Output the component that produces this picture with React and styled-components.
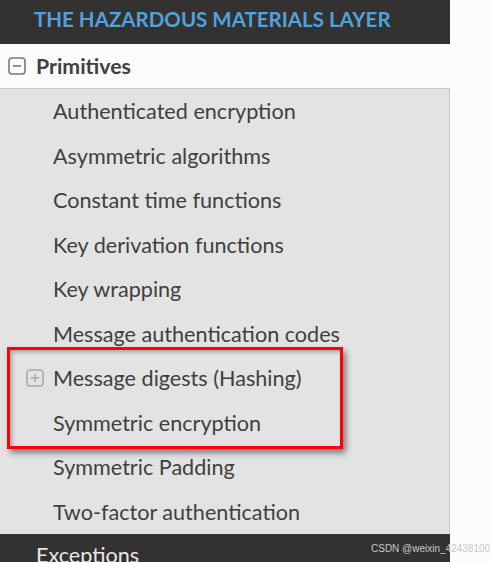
import React from "react";
import styled, { createGlobalStyle } from "styled-components";

const GlobalStyle = createGlobalStyle`
  html, body {
    margin: 0;
    padding: 0;
    background: #fcfcfc;
    font-family: Lato, "Open Sans", sans-serif;
  }
  #root {
    height: 562px;
    overflow: hidden;
  }
`;

const ITEMS_BEFORE = [
  "Authenticated encryption",
  "Asymmetric algorithms",
  "Constant time functions",
  "Key derivation functions",
  "Key wrapping",
  "Message authentication codes",
];

const ITEMS_AFTER = ["Symmetric Padding", "Two-factor authentication"];

const ToggleBox = ({ type, color }) => (
  <svg width="18" height="18" viewBox="0 0 18 18">
    <rect
      x="1"
      y="1"
      width="16"
      height="16"
      rx="3"
      fill="none"
      stroke={color}
      strokeWidth="1.6"
    />
    <line x1="5" y1="9" x2="13" y2="9" stroke={color} strokeWidth="1.6" />
    {type === "plus" && (
      <line x1="9" y1="5" x2="9" y2="13" stroke={color} strokeWidth="1.6" />
    )}
  </svg>
);

const App = () => {
  return (
    <Page>
      <GlobalStyle />
      <Sidebar>
        <Header>THE HAZARDOUS MATERIALS LAYER</Header>
        <SectionRow>
          <ToggleBox type="minus" color="#7a7a7a" />
          <SectionTitle>Primitives</SectionTitle>
        </SectionRow>
        <List>
          {ITEMS_BEFORE.map((cur) => (
            <Item key={cur}>{cur}</Item>
          ))}
          <Highlight>
            <Item>
              <IconSlot>
                <ToggleBox type="plus" color="#ababab" />
              </IconSlot>
              Message digests (Hashing)
            </Item>
            <Item>Symmetric encryption</Item>
          </Highlight>
          {ITEMS_AFTER.map((cur) => (
            <Item key={cur}>{cur}</Item>
          ))}
        </List>
        <Footer>Exceptions</Footer>
      </Sidebar>
      <Watermark>CSDN @weixin_42438100</Watermark>
    </Page>
  );
};

const Page = styled.div`
  position: relative;
  width: 490px;
  height: 562px;
  overflow: hidden;
  background: #fcfcfc;
`;

const Sidebar = styled.div`
  width: 450px;
  display: flex;
  flex-direction: column;
  background: #343131;
`;

const Header = styled.div`
  height: 44px;
  display: flex;
  align-items: center;
  padding-left: 34px;
  padding-bottom: 7px;
  box-sizing: border-box;
  color: #4fa2dc;
  font-weight: 700;
  font-size: 20.5px;
  white-space: nowrap;
`;

const SectionRow = styled.div`
  height: 44px;
  display: flex;
  align-items: center;
  gap: 10px;
  padding-left: 8px;
  padding-bottom: 1px;
  box-sizing: border-box;
  background: #fcfcfc;
`;

const SectionTitle = styled.span`
  color: #404040;
  font-weight: 700;
  font-size: 21.3px;
`;

const List = styled.div`
  display: flex;
  flex-direction: column;
  background: #e3e3e3;
  border-top: 1px solid #c9c9c9;
  border-right: 1px solid #c9c9c9;
`;

const Item = styled.div`
  position: relative;
  height: 44.5px;
  display: flex;
  align-items: center;
  padding-left: 53px;
  color: #404040;
  font-size: 21.6px;
  white-space: nowrap;
`;

const IconSlot = styled.span`
  position: absolute;
  left: 26px;
  top: 13px;
  display: flex;
`;

const Highlight = styled.div`
  position: relative;

  &::after {
    content: "";
    position: absolute;
    top: -9px;
    bottom: -4px;
    left: 7px;
    width: 336px;
    box-sizing: border-box;
    border: 3px solid #ff0000;
    box-shadow: 3px 4px 6px rgba(0, 0, 0, 0.45),
      inset 2px 2px 4px rgba(0, 0, 0, 0.3);
    pointer-events: none;
  }
`;

const Footer = styled.div`
  height: 40px;
  padding-left: 36px;
  padding-top: 8px;
  box-sizing: border-box;
  color: #e8e8e8;
  font-size: 21.6px;
`;

const Watermark = styled.div`
  position: absolute;
  left: 371px;
  top: 543px;
  font-family: "Liberation Sans", Arial, sans-serif;
  font-size: 10px;
  color: #c8c8c8;
  white-space: nowrap;
`;

export default App;
